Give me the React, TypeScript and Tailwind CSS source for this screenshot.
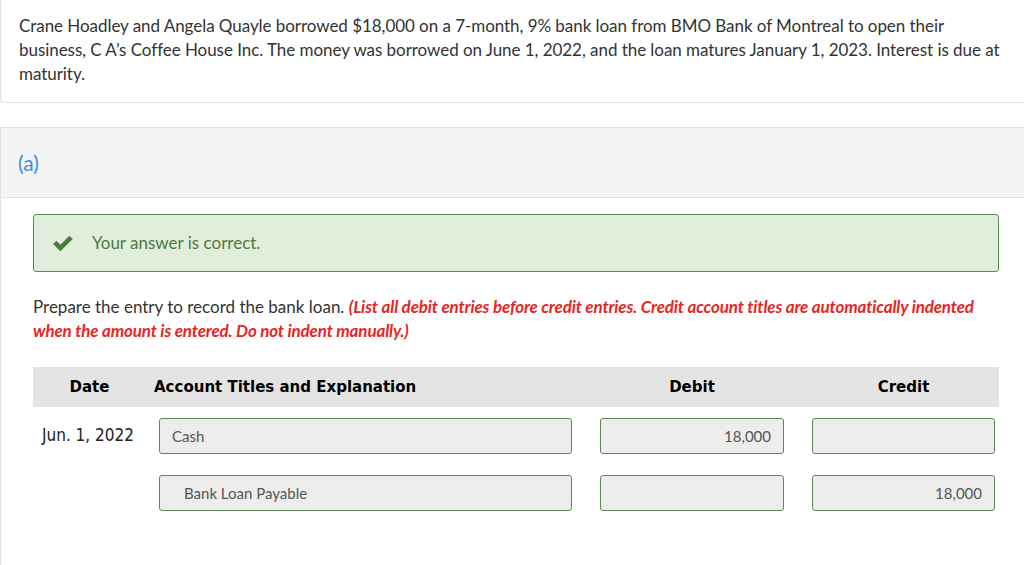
// Journal entry question - bank loan

const inputBox =
  'h-[36px] rounded-[3px] border border-[#5c8a52] bg-[#ededed] flex items-center text-[15px] text-[#555] font-["Lato",sans-serif]';

function CheckIcon() {
  return (
    <svg width="22" height="17" viewBox="0 0 21 16" aria-hidden="true">
      <path d="M1 8.5 L4.2 5.3 L8 9.1 L16.6 0.5 L19.8 3.7 L8 15.5 Z" fill="#4a7a3c" />
    </svg>
  );
}

export default function App() {
  return (
    <div className='min-h-[565px] bg-white font-["Lato",sans-serif] text-[#333]'>
      <div className="border border-t-0 border-r-0 border-[#e2e2e2] rounded-bl-[4px] h-[103px] pl-[18px] pt-[14px] text-[17px] leading-[24px] tracking-[-0.05px]">
        Crane Hoadley and Angela Quayle borrowed $18,000 on a 7-month, 9% bank loan from BMO Bank of Montreal to open their
        <br />
        business, C A’s Coffee House Inc. The money was borrowed on June 1, 2022, and the loan matures January 1, 2023. Interest is due at
        <br />
        maturity.
      </div>

      <div className="mt-[24px] border-l border-t border-[#e2e2e2] min-h-[438px]">
        <div className="h-[70px] bg-[#f4f4f4] border-b border-[#e2e2e2] flex items-center pl-[17px]">
          <span className="text-[21px] text-[#3a8ee0]">(a)</span>
        </div>

        <div className="pl-[32px] pr-[25px] pt-[16px]">
          <div className="h-[58px] rounded-[3px] border border-[#5c8a52] bg-[#e1eedb] flex items-center pl-[18px]">
            <CheckIcon />
            <span className="ml-[18px] text-[17px] text-[#4f7a44]">Your answer is correct.</span>
          </div>

          <p className="mt-[23px] text-[17px] leading-[24px]">
            Prepare the entry to record the bank loan.{' '}
            <span className="text-[#e8251f] italic font-bold tracking-[-0.15px]">
              (List all debit entries before credit entries. Credit account titles are automatically indented
              <br />
              when the amount is entered. Do not indent manually.)
            </span>
          </p>

          <div className='mt-[24px] h-[40px] bg-[#e4e4e4] flex items-center font-["DejaVu_Sans",sans-serif] font-bold text-[15px] text-black'>
            <div className="w-[113px] text-center">Date</div>
            <div className="w-[454px] pl-[8px]">Account Titles and Explanation</div>
            <div className="w-[184px] text-center">Debit</div>
            <div className="ml-[28px] w-[183px] text-center">Credit</div>
          </div>

          <div className="mt-[11px] flex items-center">
            <div className='w-[126px] pl-[9px] font-["DejaVu_Sans_Condensed","DejaVu_Sans",sans-serif] text-[17px] text-[#222]'>
              Jun. 1, 2022
            </div>
            <div className={`${inputBox} w-[413px] pl-[12px]`}>Cash</div>
            <div className={`${inputBox} ml-[28px] w-[184px] justify-end pr-[12px]`}>18,000</div>
            <div className={`${inputBox} ml-[28px] w-[183px]`}></div>
          </div>

          <div className="mt-[21px] flex items-center">
            <div className="w-[126px]"></div>
            <div className={`${inputBox} w-[413px] pl-[24px]`}>Bank Loan Payable</div>
            <div className={`${inputBox} ml-[28px] w-[184px]`}></div>
            <div className={`${inputBox} ml-[28px] w-[183px] justify-end pr-[12px]`}>18,000</div>
          </div>
        </div>
      </div>
    </div>
  );
}
